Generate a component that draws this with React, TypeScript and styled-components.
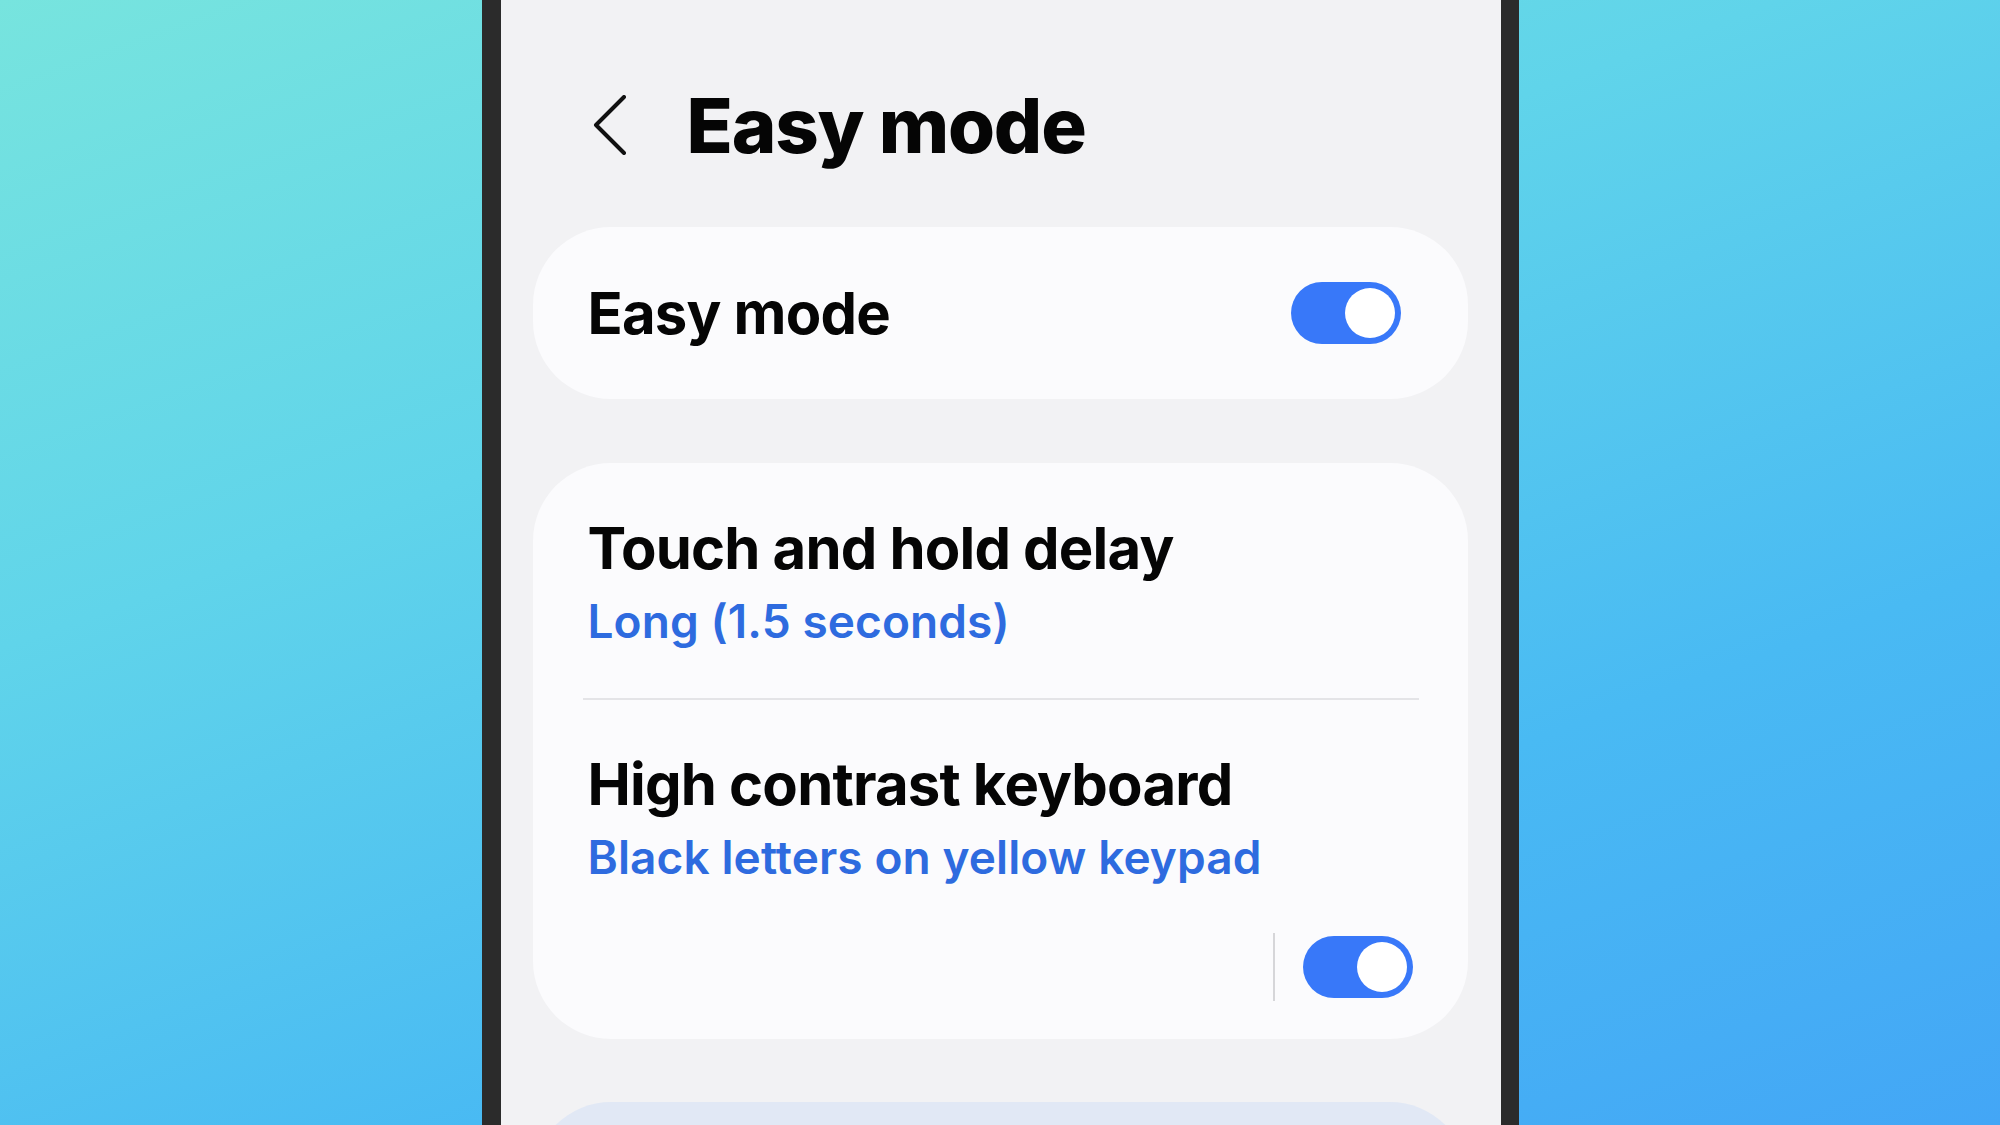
import React from 'react';
import styled, { createGlobalStyle } from 'styled-components';

const GlobalStyle = createGlobalStyle`
	html, body {
		margin: 0;
		padding: 0;
	}
	body {
		width: 2000px;
		height: 1125px;
		overflow: hidden;
		font-family: Inter, "Noto Sans", sans-serif;
		-webkit-font-smoothing: antialiased;
	}
`;

const Backdrop = styled.div`
	width: 2000px;
	height: 1125px;
	display: flex;
	justify-content: center;
	overflow: hidden;
	background: linear-gradient(160deg, #77e4de 0%, #60d4ea 35%, #49baf3 70%, #43a6f6 100%);
`;

const Phone = styled.div`
	width: 1037px;
	height: 100%;
	box-sizing: border-box;
	border-left: 19px solid #2b2b2b;
	border-right: 18px solid #2b2b2b;
	background: #f2f2f4;
	padding: 0 33px 0 32px;
	display: flex;
	flex-direction: column;
	overflow: hidden;
`;

const Header = styled.header`
	display: flex;
	flex-shrink: 0;
	align-items: center;
	height: 60px;
	padding: 95px 0 0 59px;
	margin-bottom: 72px;
	gap: 59px;
`;

const BackButton = styled.button`
	border: none;
	background: transparent;
	padding: 0;
	margin: 0;
	width: 36px;
	height: 60px;
	cursor: pointer;
	svg {
		display: block;
	}
`;

const PageTitle = styled.h1`
	margin: 0;
	font-size: 76px;
	line-height: 60px;
	font-weight: 800;
	letter-spacing: -1.2px;
	color: #050505;
`;

const Card = styled.section<{ $tint?: string }>`
	flex-shrink: 0;
	background: ${({ $tint }) => $tint || '#fbfbfd'};
	border-radius: 78px;
	display: flex;
	flex-direction: column;
`;

const SwitchCard = styled(Card)`
	height: 172px;
	flex-direction: row;
	align-items: center;
	justify-content: space-between;
	padding: 0 67px 0 55px;
`;

const ListCard = styled(Card)`
	margin-top: 64px;
	padding-bottom: 38px;
`;

const FooterCard = styled(Card)`
	margin-top: 63px;
	height: 220px;
`;

const Item = styled.div<{ $top: number; $bottom?: number }>`
	padding: ${({ $top, $bottom = 0 }) => `${$top}px 55px ${$bottom}px 55px`};
	display: flex;
	flex-direction: column;
`;

const ItemTitle = styled.div`
	font-size: 58px;
	line-height: 70px;
	font-weight: 700;
	letter-spacing: -0.8px;
	color: #050505;
`;

const ItemValue = styled.div`
	margin-top: 11px;
	font-size: 46px;
	line-height: 55px;
	font-weight: 600;
	letter-spacing: 0.1px;
	color: #2e6bdf;
`;

const Divider = styled.hr`
	border: none;
	height: 2px;
	margin: 0 49px 0 50px;
	background: #e4e4e7;
`;

const ActionRow = styled.div`
	margin-top: 48px;
	display: flex;
	justify-content: flex-end;
	align-items: center;
	gap: 28px;
`;

const VerticalRule = styled.span`
	width: 2px;
	height: 68px;
	background: #d6d6d9;
`;

const Switch = styled.button<{ $on: boolean }>`
	width: 110px;
	height: 62px;
	box-sizing: border-box;
	border: none;
	border-radius: 31px;
	padding: 0 6px;
	display: flex;
	align-items: center;
	justify-content: ${({ $on }) => ($on ? 'flex-end' : 'flex-start')};
	background: ${({ $on }) => ($on ? '#3878f9' : '#b9b9be')};
	cursor: pointer;
	&::before {
		content: '';
		width: 50px;
		height: 50px;
		border-radius: 50%;
		background: #ffffff;
	}
`;

const ChevronLeft = () => (
	<svg width="36" height="60" viewBox="0 0 36 60" fill="none">
		<polyline
			points="32,2 4,30 32,58"
			stroke="#111"
			strokeWidth="4"
			strokeLinecap="round"
			strokeLinejoin="round"
		/>
	</svg>
);

export default function App() {
	return (
		<>
			<GlobalStyle />
			<Backdrop>
				<Phone>
					<Header>
						<BackButton aria-label="Back">
							<ChevronLeft />
						</BackButton>
						<PageTitle>Easy mode</PageTitle>
					</Header>

					<SwitchCard>
						<ItemTitle>Easy mode</ItemTitle>
						<Switch $on={true} aria-label="Easy mode" />
					</SwitchCard>

					<ListCard>
						<Item $top={50} $bottom={49}>
							<ItemTitle>Touch and hold delay</ItemTitle>
							<ItemValue>Long (1.5 seconds)</ItemValue>
						</Item>
						<Divider />
						<Item $top={49}>
							<ItemTitle>High contrast keyboard</ItemTitle>
							<ItemValue>Black letters on yellow keypad</ItemValue>
							<ActionRow>
								<VerticalRule />
								<Switch $on={true} aria-label="High contrast keyboard" />
							</ActionRow>
						</Item>
					</ListCard>

					<FooterCard $tint="#e1e8f5" />
				</Phone>
			</Backdrop>
		</>
	);
}
